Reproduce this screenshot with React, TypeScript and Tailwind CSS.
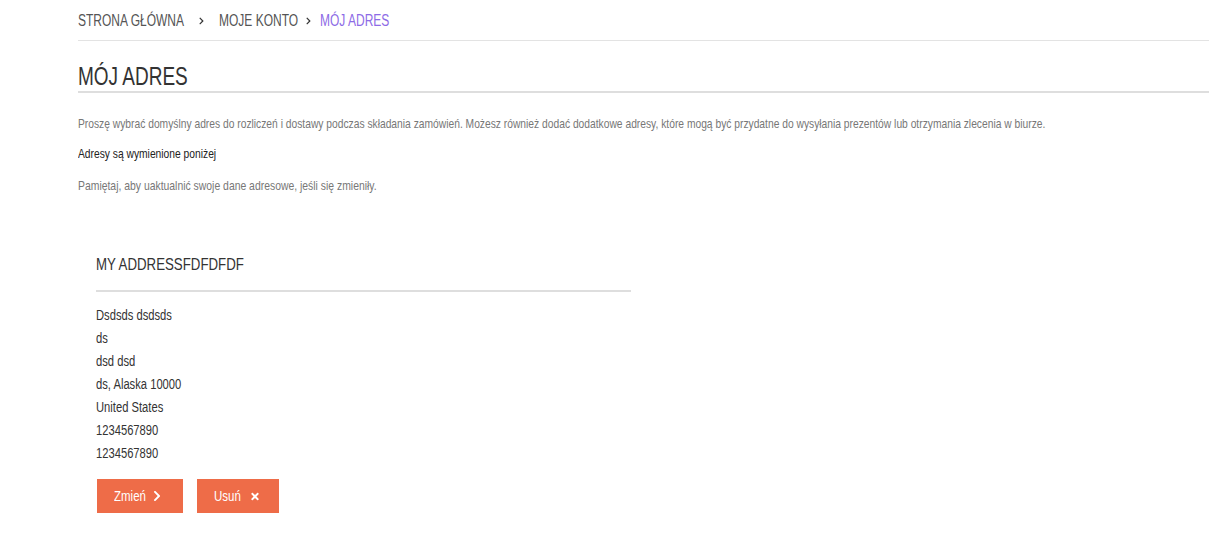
import React from 'react';
import { FaChevronRight, FaTimes } from 'react-icons/fa';

const font = { fontFamily: '"Liberation Sans", Arial, sans-serif' };

// condensed look: no narrow font installed, so squeeze the glyphs horizontally
const Cond: React.FC<{ s: string; children: React.ReactNode }> = ({ s, children }) => (
  <span className={`inline-block origin-left whitespace-nowrap ${s}`}>{children}</span>
);

const addressLines = [
  'Dsdsds dsdsds',
  'ds',
  'dsd dsd',
  'ds, Alaska 10000',
  'United States',
  '1234567890',
  '1234567890',
];

const Breadcrumbs: React.FC = () => (
  <div className="flex items-center h-[41px] pt-[1px] border-b border-[#e3e3e3] text-[16px] text-[#555] uppercase">
    <div className="w-[105px]">
      <Cond s="scale-x-[0.75]">Strona Główna</Cond>
    </div>
    <div className="w-[36px] flex justify-center">
      <FaChevronRight className="w-[7px] h-[8px] text-[#333]" />
    </div>
    <div className="w-[78px]">
      <Cond s="scale-x-[0.75]">Moje Konto</Cond>
    </div>
    <div className="w-[23px] flex justify-center">
      <FaChevronRight className="w-[7px] h-[8px] text-[#333]" />
    </div>
    <div className="w-[70px] text-[#8d6be6]">
      <Cond s="scale-x-[0.75]">Mój Adres</Cond>
    </div>
  </div>
);

const AddressCard: React.FC = () => (
  <div className="w-[535px] ml-[18px] mt-[60px]">
    <h3 className="text-[17px] leading-[20px] text-[#333] uppercase pb-[15px] border-b-2 border-[#dedede]">
      <Cond s="scale-x-[0.78]">My addressfdfdfdf</Cond>
    </h3>
    <address className="not-italic text-[14px] text-[#333] leading-[23px] pt-[12px]">
      {addressLines.map((l, i) => (
        <div key={i}>
          <Cond s="scale-x-[0.8]">{l}</Cond>
        </div>
      ))}
    </address>
    <div className="flex gap-[14px] mt-[14px] ml-[1px]">
      <button className="h-[34px] w-[86px] bg-[#ee6c48] text-white text-[14px] flex items-center pl-[17px]">
        <span className="w-[38px] text-left">
          <Cond s="scale-x-[0.82]">Zmień</Cond>
        </span>
        <FaChevronRight className="w-[10px] h-[12px]" />
      </button>
      <button className="h-[34px] w-[82px] bg-[#ee6c48] text-white text-[14px] flex items-center pl-[17px]">
        <span className="w-[36px] text-left">
          <Cond s="scale-x-[0.82]">Usuń</Cond>
        </span>
        <FaTimes className="w-[10px] h-[11px]" />
      </button>
    </div>
  </div>
);

export default function App() {
  return (
    <div className="bg-white min-h-[548px] pl-[78px] overflow-hidden" style={font}>
      <Breadcrumbs />
      <h1 className="text-[25px] text-[#333] uppercase mt-[22px] pb-[2px] border-b-2 border-[#dedede] leading-[26px]">
        <Cond s="scale-x-[0.76]">Mój Adres</Cond>
      </h1>
      <div className="text-[13px] leading-[18px] mt-[22px]">
        <p className="text-[#777] overflow-hidden">
          <Cond s="scale-x-[0.79]">
            Proszę wybrać domyślny adres do rozliczeń i dostawy podczas składania zamówień. Możesz również dodać dodatkowe adresy, które mogą być przydatne do wysyłania prezentów lub otrzymania zlecenia w biurze.
          </Cond>
        </p>
        <p className="text-[#222] mt-[12px]">
          <Cond s="scale-x-[0.79]">Adresy są wymienione poniżej</Cond>
        </p>
        <p className="text-[#777] mt-[14px]">
          <Cond s="scale-x-[0.8]">Pamiętaj, aby uaktualnić swoje dane adresowe, jeśli się zmieniły.</Cond>
        </p>
      </div>
      <AddressCard />
    </div>
  );
}
